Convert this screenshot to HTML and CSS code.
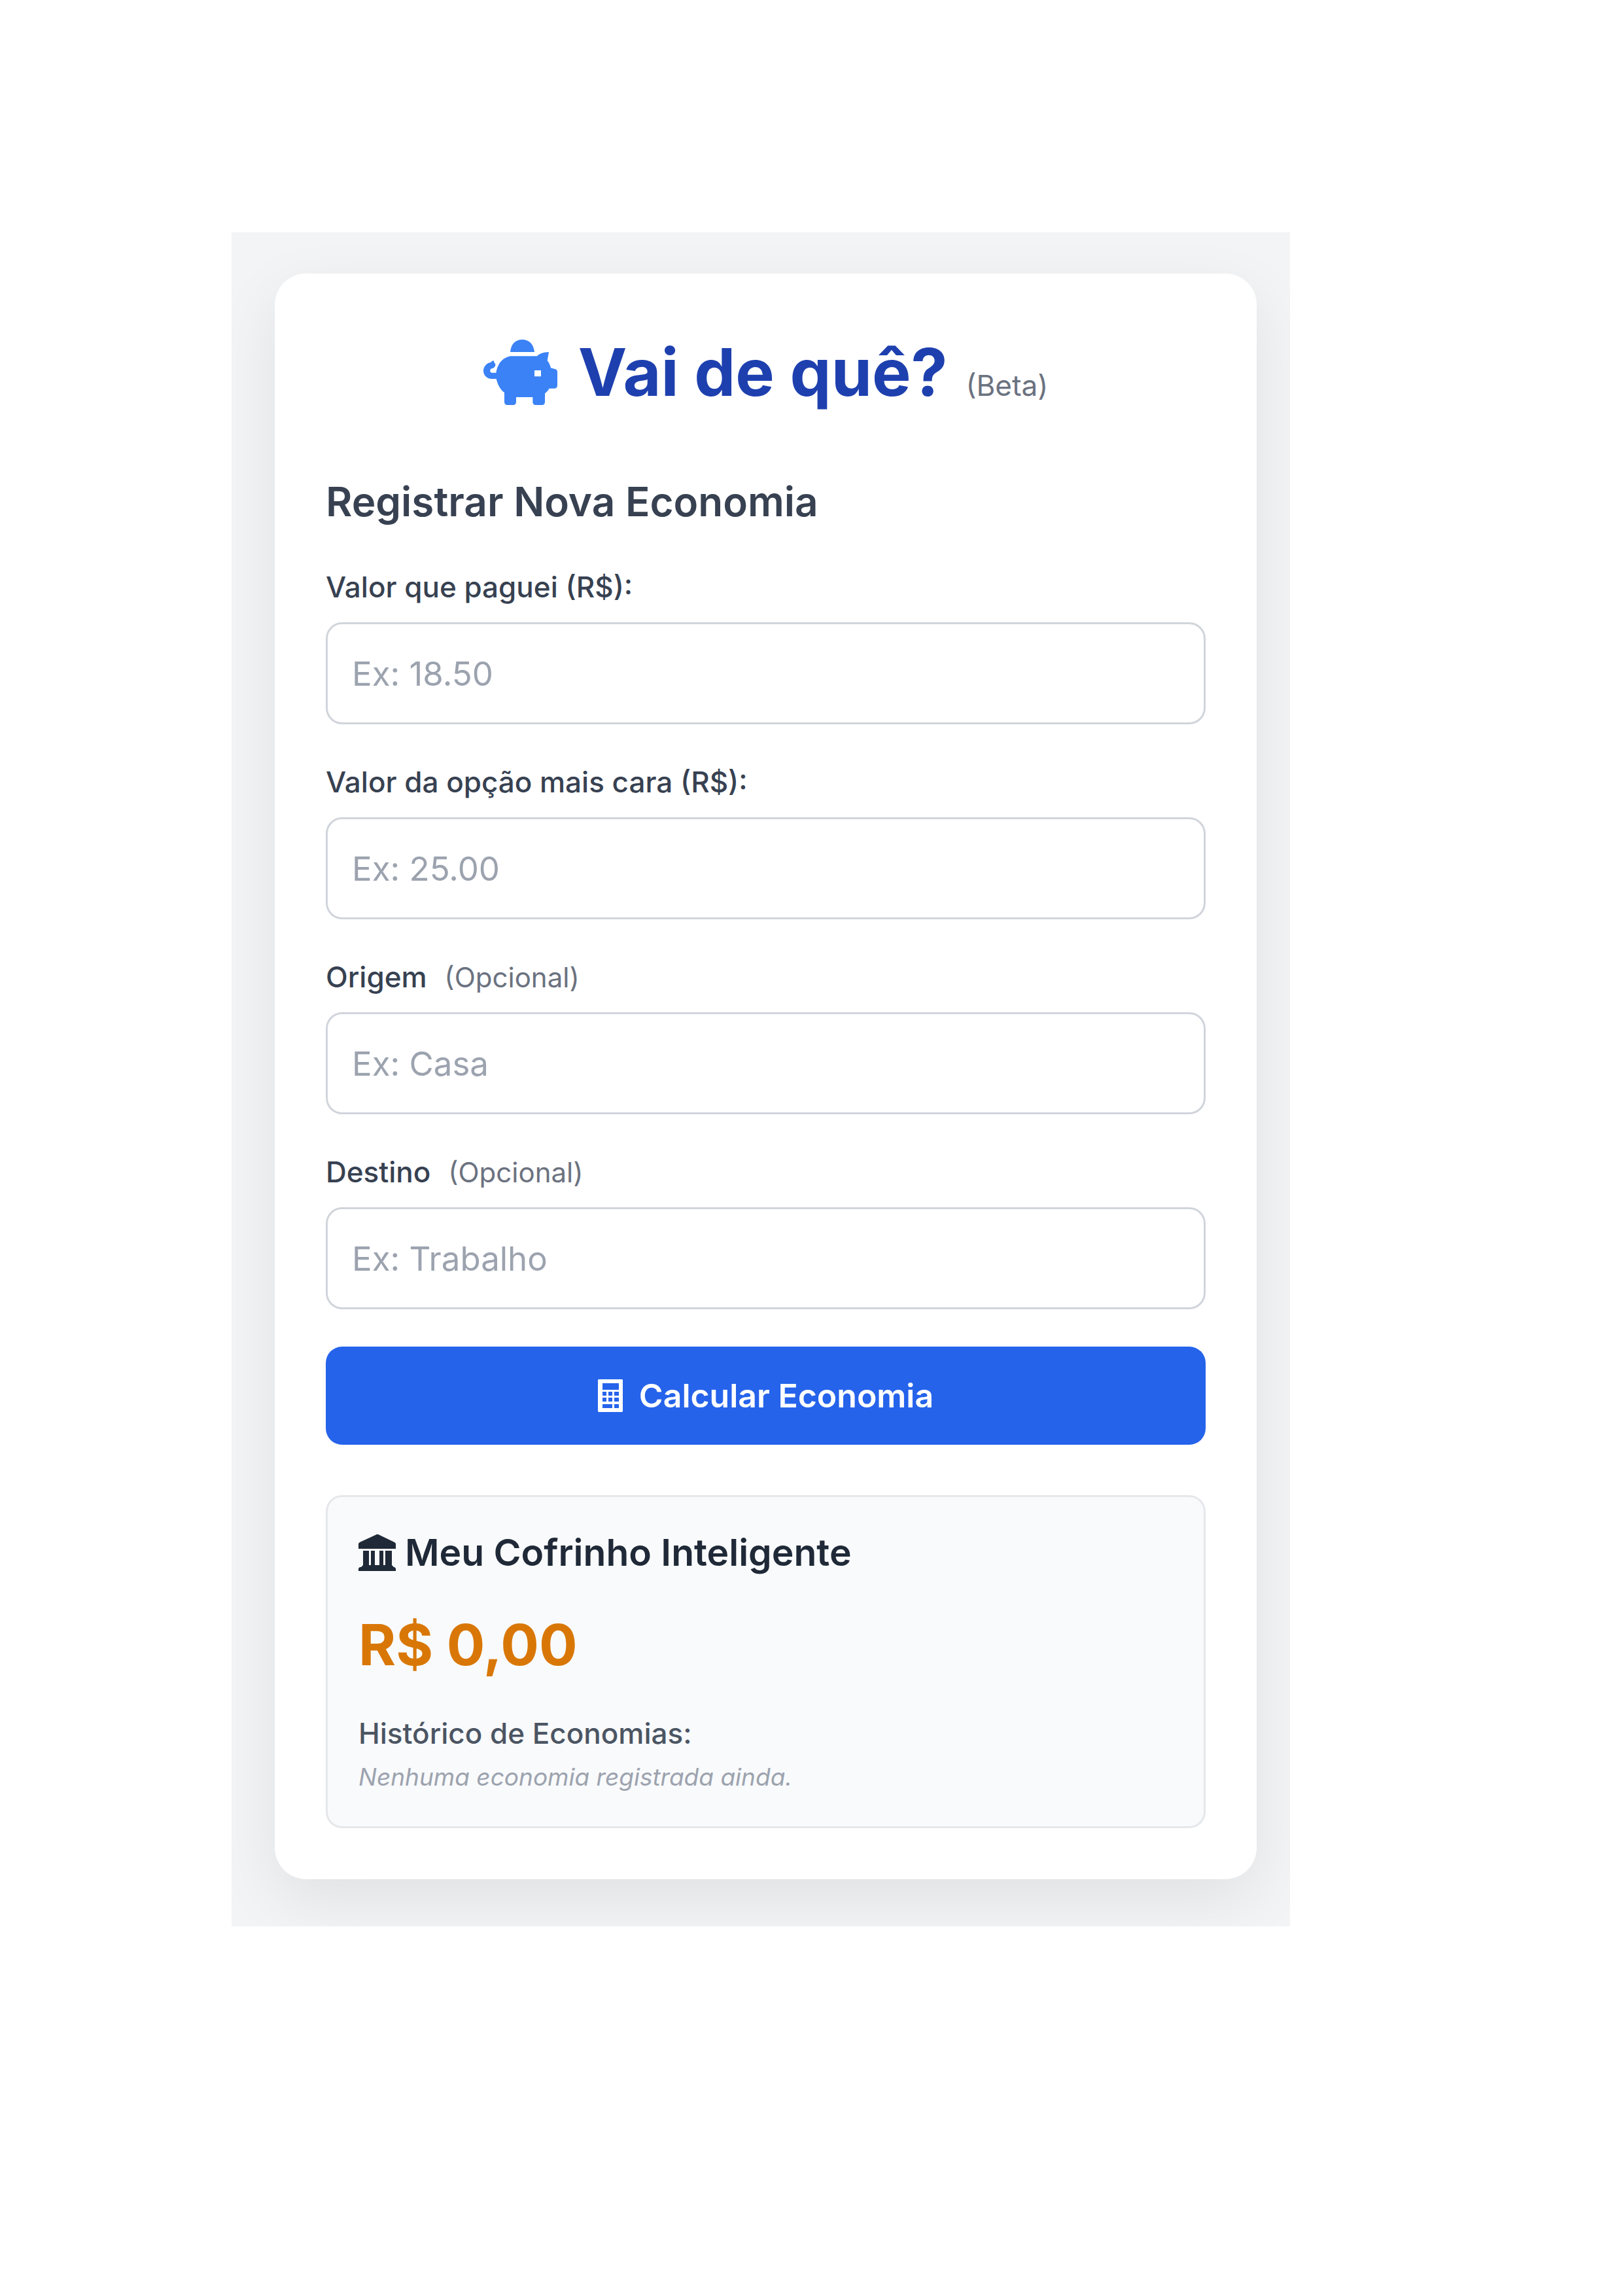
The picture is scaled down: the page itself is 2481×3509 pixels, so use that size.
FILE: index.html
```html
<!DOCTYPE html>
<html lang="pt-BR">
<head>
<meta charset="utf-8">
<meta name="viewport" content="width=device-width, initial-scale=1">
<title>Vai de quê?</title>
<link rel="stylesheet" href="styles.css">
</head>
<body>
<div class="screen">
  <main class="card">
    <h1 class="title">
      <svg class="icon-pig" viewBox="0 0 339 300" aria-hidden="true">
        <path d="M123 57C126 20 148 0 178 0S230 20 234 57Z"/>
        <path fill-rule="evenodd" d="M123 76H246C258 63 275 58 300 57L293 96C301 106 306 117 309 130L325 134C335 136 339 140 339 150V208C339 219 336 224 325 224H302C296 233 290 241 282 247V286Q282 300 268 300H240Q226 300 226 286V264H150V286Q150 300 136 300H110Q96 300 96 286V243C76 228 65 205 59 180H38C15 180 0 162 0 143C0 123 15 107 34 104C44 92 51 97 49 106C62 113 52 128 42 132C31 130 25 149 38 152H58C64 112 86 84 123 76ZM234 141V169H264V141Z"/>
      </svg>
      <span>Vai de quê?</span>
      <small class="beta">(Beta)</small>
    </h1>

    <form class="form">
      <h2 class="heading">Registrar Nova Economia</h2>
      <div class="field">
        <label for="pago">Valor que paguei (R$):</label>
        <input id="pago" type="text" inputmode="decimal" placeholder="Ex: 18.50">
      </div>
      <div class="field">
        <label for="cara">Valor da opção mais cara (R$):</label>
        <input id="cara" type="text" inputmode="decimal" placeholder="Ex: 25.00">
      </div>
      <div class="field">
        <label for="origem">Origem <span class="optional">(Opcional)</span></label>
        <input id="origem" type="text" placeholder="Ex: Casa">
      </div>
      <div class="field">
        <label for="destino">Destino <span class="optional">(Opcional)</span></label>
        <input id="destino" type="text" placeholder="Ex: Trabalho">
      </div>
      <button class="submit" type="button">
        <svg class="icon-calc" viewBox="0 0 38 50" aria-hidden="true">
          <path fill-rule="evenodd" d="M1 0H37L38 1V49L37 50H1L0 49V1ZM7 6V16H32V6ZM7 19V25H13V19ZM16 19V25H22V19ZM25 19V25H32V19ZM7 28V34H13V28ZM16 28V34H22V28ZM25 28V34H32V28ZM7 38V44H22V38ZM25 38V44H32V38Z"/>
        </svg>
        Calcular Economia
      </button>
    </form>

    <section class="savings">
      <h3 class="savings-title">
        <svg class="icon-bank" viewBox="0 0 57 56" aria-hidden="true">
          <path d="M28 0H30L55 12L57 14V22H0V14L2 12ZM7 25H16V47H19V25H25V47H32V25H38V47H41V25H51V47L54 50H55L57 52V56H0V52L2 50H4L7 47Z"/>
        </svg>
        Meu Cofrinho Inteligente
      </h3>
      <p class="total">R$ 0,00</p>
      <h4 class="history-title">Histórico de Economias:</h4>
      <p class="history-empty">Nenhuma economia registrada ainda.</p>
    </section>
  </main>
</div>
</body>
</html>
```

FILE: styles.css
```css
*,
*::before,
*::after {
  box-sizing: border-box;
}

body {
  margin: 0;
  padding: 355px 509px 355px 354px;
  background: #fff;
  color: #374151;
  font-family: Inter, "Liberation Sans", sans-serif;
}

h1, h2, h3, h4, p {
  margin: 0;
}

svg {
  flex: none;
  fill: currentColor;
}

.screen {
  padding: 63px 51px 72px 66px;
  background: #f3f4f6;
  overflow: hidden;
}

.card {
  padding: 78px;
  border-radius: 48px;
  background: #fff;
  box-shadow: 0 32px 96px rgba(0, 0, 0, 0.08);
}

.title {
  display: flex;
  justify-content: center;
  align-items: baseline;
  margin-bottom: 83px;
  color: #1e40af;
  font-size: 100px;
  font-weight: 700;
  line-height: 146px;
}

.icon-pig {
  align-self: center;
  width: 113px;
  height: 100px;
  margin-right: 32px;
  color: #3b82f6;
}

.beta {
  margin-left: 28px;
  color: #6b7280;
  font-size: 44px;
  font-weight: 400;
  line-height: 62px;
}

.form {
  display: flex;
  flex-direction: column;
  gap: 57px;
}

.heading {
  font-size: 62px;
  font-weight: 600;
  line-height: 84px;
}

.field {
  display: flex;
  flex-direction: column;
  gap: 23px;
}

.field label {
  font-size: 44px;
  font-weight: 500;
  line-height: 62px;
}

.optional {
  margin-left: 15px;
  color: #6b7280;
  font-size: 42px;
  font-weight: 400;
  line-height: 1;
}

.field input {
  width: 100%;
  height: 156px;
  padding: 0 37px;
  border: 3px solid #d1d5db;
  border-radius: 25px;
  background: #fff;
  color: #374151;
  font: 400 51px Inter, "Liberation Sans", sans-serif;
}

.field input::placeholder {
  color: #9ca3af;
  opacity: 1;
}

.submit {
  display: flex;
  justify-content: center;
  align-items: center;
  gap: 25px;
  height: 150px;
  padding: 0;
  border: 0;
  border-radius: 25px;
  background: #2563eb;
  color: #fff;
  font: 600 50px Inter, "Liberation Sans", sans-serif;
}

.icon-calc {
  width: 38px;
  height: 50px;
}

.savings {
  margin-top: 77px;
  padding: 47px;
  border: 3px solid #e5e7eb;
  border-radius: 25px;
  background: #f9fafb;
}

.savings-title {
  display: flex;
  align-items: center;
  gap: 14px;
  margin-bottom: 49px;
  color: #1f2937;
  font-size: 57px;
  font-weight: 600;
  line-height: 76px;
}

.icon-bank {
  width: 57px;
  height: 56px;
}

.total {
  margin-bottom: 50px;
  color: #d97706;
  font-size: 87px;
  font-weight: 700;
  line-height: 108px;
}

.history-title {
  margin-bottom: 8px;
  color: #4b5563;
  font-size: 44px;
  font-weight: 500;
  line-height: 62px;
}

.history-empty {
  color: #9ca3af;
  font-size: 37px;
  font-style: italic;
  line-height: 56px;
}
```
